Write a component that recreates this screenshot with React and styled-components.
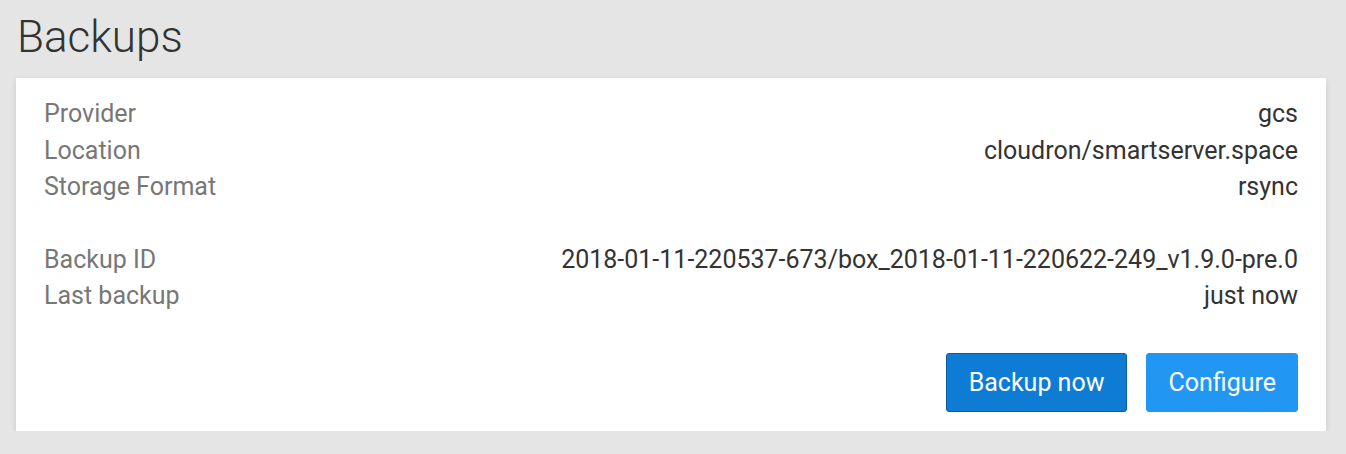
import React from "react";
import styled, { createGlobalStyle } from "styled-components";

const GlobalStyle = createGlobalStyle`
  html, body {
    margin: 0;
    padding: 0;
    background: #e5e5e5;
    font-family: Roboto, "Liberation Sans", sans-serif;
  }
`;

const Page = styled.div`
  padding: 10px 20px 0 16px;
  width: 1346px;
  box-sizing: border-box;
`;

const Title = styled.h1`
  margin: 0 0 14px 1px;
  font-size: 44px;
  font-weight: 300;
  line-height: 54px;
  color: #333;
`;

const Card = styled.div`
  background: #fff;
  box-shadow: 0 2px 6px rgba(0, 0, 0, 0.12);
  padding: 18px 28px 19px;
`;

const Row = styled.div`
  display: flex;
  justify-content: space-between;
  font-size: 25px;
  line-height: 36.5px;
`;

const Spacer = styled.div`
  height: 36px;
`;

const Label = styled.span`
  color: #777;
`;

const Value = styled.span`
  color: #333;
`;

const Actions = styled.div`
  display: flex;
  justify-content: flex-end;
  gap: 19px;
  margin-top: 38px;
`;

const Button = styled.button`
  height: 59px;
  padding: 0 ${(p) => (p.$primary ? "22px" : "21px")};
  font-family: inherit;
  font-size: 25px;
  color: #fff;
  border-radius: 3px;
  border: 1px solid ${(p) => (p.$primary ? "#0b5aa0" : "#2196f3")};
  background: ${(p) => (p.$primary ? "#0e7cd4" : "#2196f3")};
  cursor: pointer;
`;

const rows = [
  ["Provider", "gcs"],
  ["Location", "cloudron/smartserver.space"],
  ["Storage Format", "rsync"],
  null,
  ["Backup ID", "2018-01-11-220537-673/box_2018-01-11-220622-249_v1.9.0-pre.0"],
  ["Last backup", "just now"],
];

export default function App() {
  return (
    <>
      <GlobalStyle />
      <Page>
        <Title>Backups</Title>
        <Card>
          {rows.map((r, i) =>
            r ? (
              <Row key={i}>
                <Label>{r[0]}</Label>
                <Value>{r[1]}</Value>
              </Row>
            ) : (
              <Spacer key={i} />
            )
          )}
          <Actions>
            <Button $primary>Backup now</Button>
            <Button>Configure</Button>
          </Actions>
        </Card>
      </Page>
    </>
  );
}
